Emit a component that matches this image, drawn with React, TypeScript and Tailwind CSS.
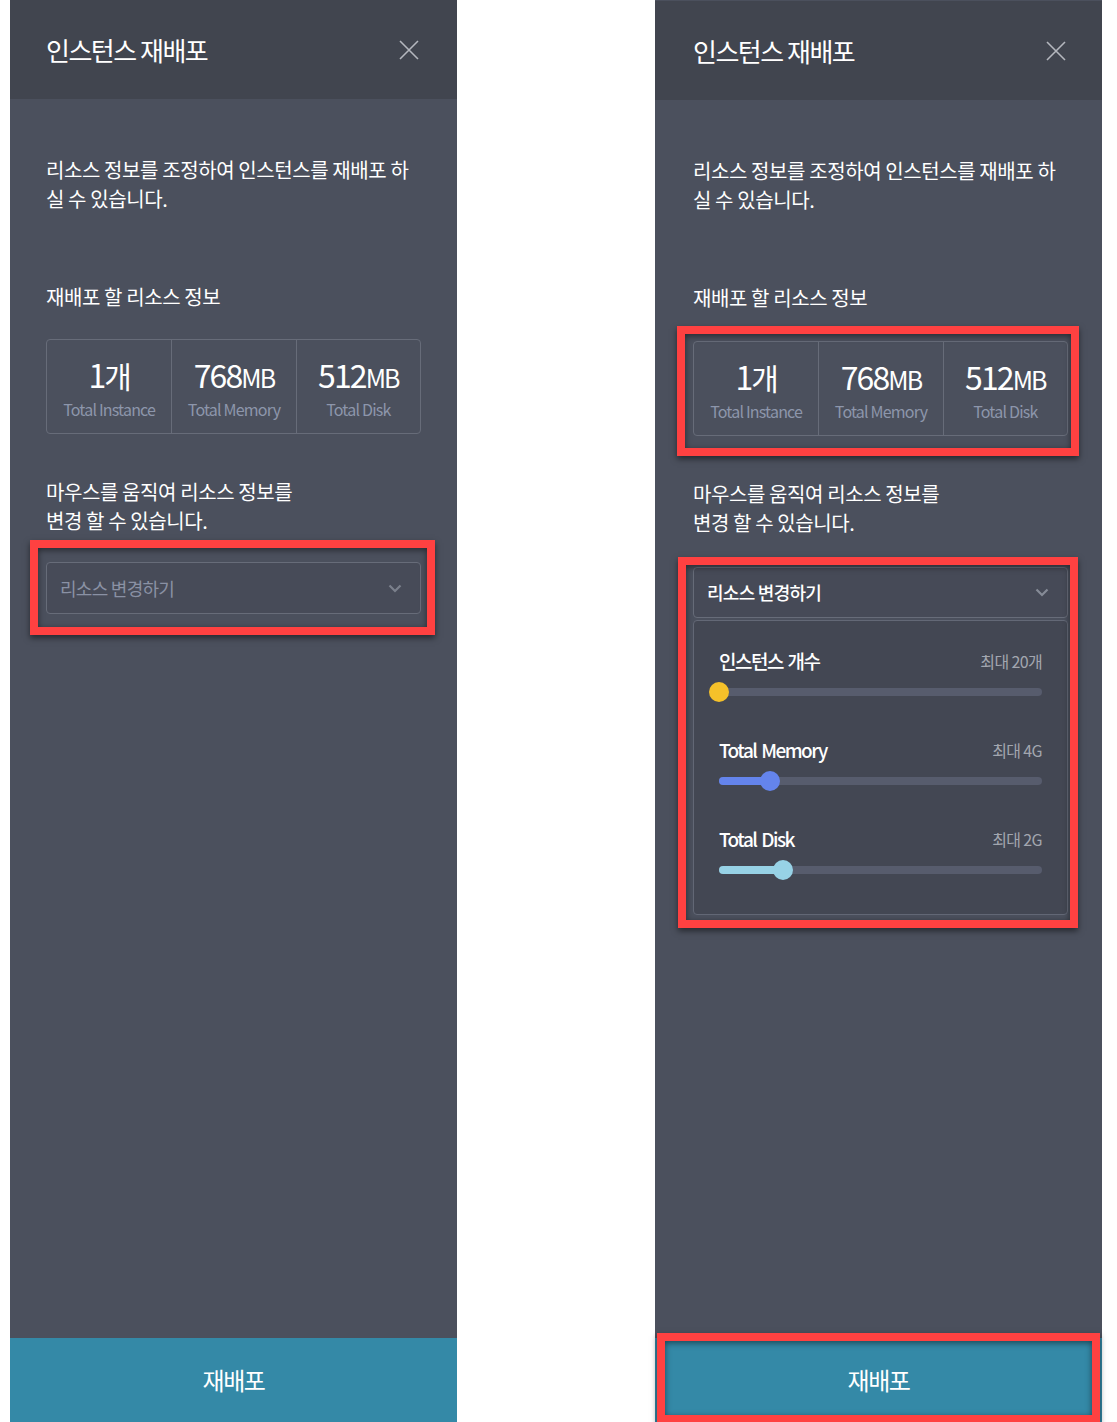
import { ReactNode } from "react";

const font = "font-['Noto_Sans_CJK_KR','Noto_Sans',sans-serif]";

function Mark({ className }: { className: string }) {
  return (
    <div
      className={
        "pointer-events-none absolute border-[8px] border-[#ff4141] shadow-[0_3px_6px_rgba(0,0,0,0.5),inset_0_2px_6px_rgba(0,0,0,0.5)] " +
        className
      }
    />
  );
}

function CloseIcon() {
  return (
    <svg width="20" height="20" viewBox="0 0 20 20" fill="none">
      <path d="M1 1L19 19M19 1L1 19" stroke="#b4b7be" strokeWidth="1.6" />
    </svg>
  );
}

function Chevron({ color }: { color: string }) {
  return (
    <svg width="14" height="9" viewBox="0 0 14 9" fill="none">
      <path d="M1.5 1.5L7 7L12.5 1.5" stroke={color} strokeWidth="2.2" />
    </svg>
  );
}

function StatCell({ value, unit, label, first }: { value: string; unit: string; label: string; first?: boolean }) {
  return (
    <div className={"flex flex-col items-center pt-[13px] pb-[13px] " + (first ? "" : "border-l border-[#676c79]")}>
      <div className="h-[42px] leading-[42px] text-white text-[32px] tracking-[-0.06em]">
        {value}
        <span className={unit === "개" ? "text-[30px]" : "text-[25px]"}>{unit}</span>
      </div>
      <div className="mt-[3px] text-[16px] leading-[22px] text-[#8d96ab] tracking-[-0.05em]">{label}</div>
    </div>
  );
}

function Stats() {
  return (
    <div className="grid grid-cols-3 rounded-[4px] border border-[#676c79]">
      <StatCell first value="1" unit="개" label="Total Instance" />
      <StatCell value="768" unit="MB" label="Total Memory" />
      <StatCell value="512" unit="MB" label="Total Disk" />
    </div>
  );
}

function Slider({ label, max, pct, color }: { label: string; max: string; pct: number; color: string }) {
  return (
    <div>
      <div className="flex h-[26px] items-center justify-between">
        <span className="text-[19px] font-medium text-white tracking-[-0.08em] [word-spacing:2px]">{label}</span>
        <span className="text-[16px] text-[#a2a6af] tracking-[-0.04em]">{max}</span>
      </div>
      <div className="relative mt-[8px] flex h-[20px] items-center">
        <div className="h-[8px] w-full rounded-full bg-[#575c6d]">
          <div className="h-full rounded-full" style={{ width: pct + "%", backgroundColor: color }} />
        </div>
        <div
          className="absolute top-0 h-[20px] w-[20px] -translate-x-1/2 rounded-full"
          style={{ left: pct + "%", backgroundColor: color }}
        />
      </div>
    </div>
  );
}

function Text({ children, className }: { children: ReactNode; className?: string }) {
  return <div className={"text-[20px] leading-[29px] text-white tracking-[-0.02em] " + (className ?? "")}>{children}</div>;
}

function Panel({ expanded }: { expanded?: boolean }) {
  return (
    <div className={"flex h-full w-[447px] flex-col bg-[#4b505d] " + (expanded ? "pt-[1px]" : "")}>
      <div
        className={
          "flex h-[99px] shrink-0 items-center justify-between bg-[#41454f] " +
          (expanded ? "pl-[38px] pr-[36px]" : "pl-[36px] pr-[38px]")
        }
      >
        <span className="text-[26px] text-white tracking-[-0.058em]">인스턴스 재배포</span>
        <CloseIcon />
      </div>

      <div className={"flex-1 pt-[56px] " + (expanded ? "pl-[38px] pr-[34px]" : "px-[36px]")}>
        <Text>
          리소스 정보를 조정하여 인스턴스를 재배포 하<br />실 수 있습니다.
        </Text>
        <Text className="mt-[69px]">재배포 할 리소스 정보</Text>

        <div className={"relative " + (expanded ? "mt-[29px]" : "mt-[28px]")}>
          <Stats />
          {expanded && <Mark className="-left-[16px] -right-[11px] -top-[15px] -bottom-[20px]" />}
        </div>

        <Text className="mt-[43px]">
          마우스를 움직여 리소스 정보를
          <br />
          변경 할 수 있습니다.
        </Text>

        {expanded ? (
          <div className="relative mt-[30px]">
            <div className="flex h-[51px] items-center justify-between rounded-[4px] border border-[#676c79] bg-[#464a57] pl-[13px] pr-[18px]">
              <span className="text-[18px] font-medium text-white tracking-[-0.04em]">리소스 변경하기</span>
              <Chevron color="#868b97" />
            </div>
            <div className="mt-[2px] flex h-[295px] flex-col gap-[35px] rounded-[4px] border border-[#636876] bg-[#434753] px-[25px] pt-[27px]">
              <Slider label="인스턴스 개수" max="최대 20개" pct={0} color="#f5c12a" />
              <Slider label="Total Memory" max="최대 4G" pct={15.8} color="#6484ec" />
              <Slider label="Total Disk" max="최대 2G" pct={19.9} color="#97d2e6" />
            </div>
            <Mark className="-left-[15px] -right-[10px] -top-[10px] -bottom-[13px]" />
          </div>
        ) : (
          <div className="relative mt-[27px]">
            <div className="flex h-[52px] items-center justify-between rounded-[4px] border border-[#676c79] bg-[#474b58] pl-[13px] pr-[18px]">
              <span className="text-[18px] text-[#8a91a4] tracking-[-0.04em]">리소스 변경하기</span>
              <Chevron color="#7b808c" />
            </div>
            <Mark className="-left-[16px] -right-[14px] -top-[22px] -bottom-[21px]" />
          </div>
        )}
      </div>

      <div className="relative flex h-[84px] shrink-0 items-center justify-center bg-[#3489a7]">
        <span className="text-[24px] text-white tracking-[-0.06em]">재배포</span>
        {expanded && <Mark className="left-[2px] right-[2px] -top-[5px] -bottom-[1px]" />}
      </div>
    </div>
  );
}

export default function App() {
  return (
    <div className={"flex h-[1422px] w-[1117px] gap-[198px] overflow-hidden bg-white pl-[10px] " + font}>
      <Panel />
      <Panel expanded />
    </div>
  );
}
